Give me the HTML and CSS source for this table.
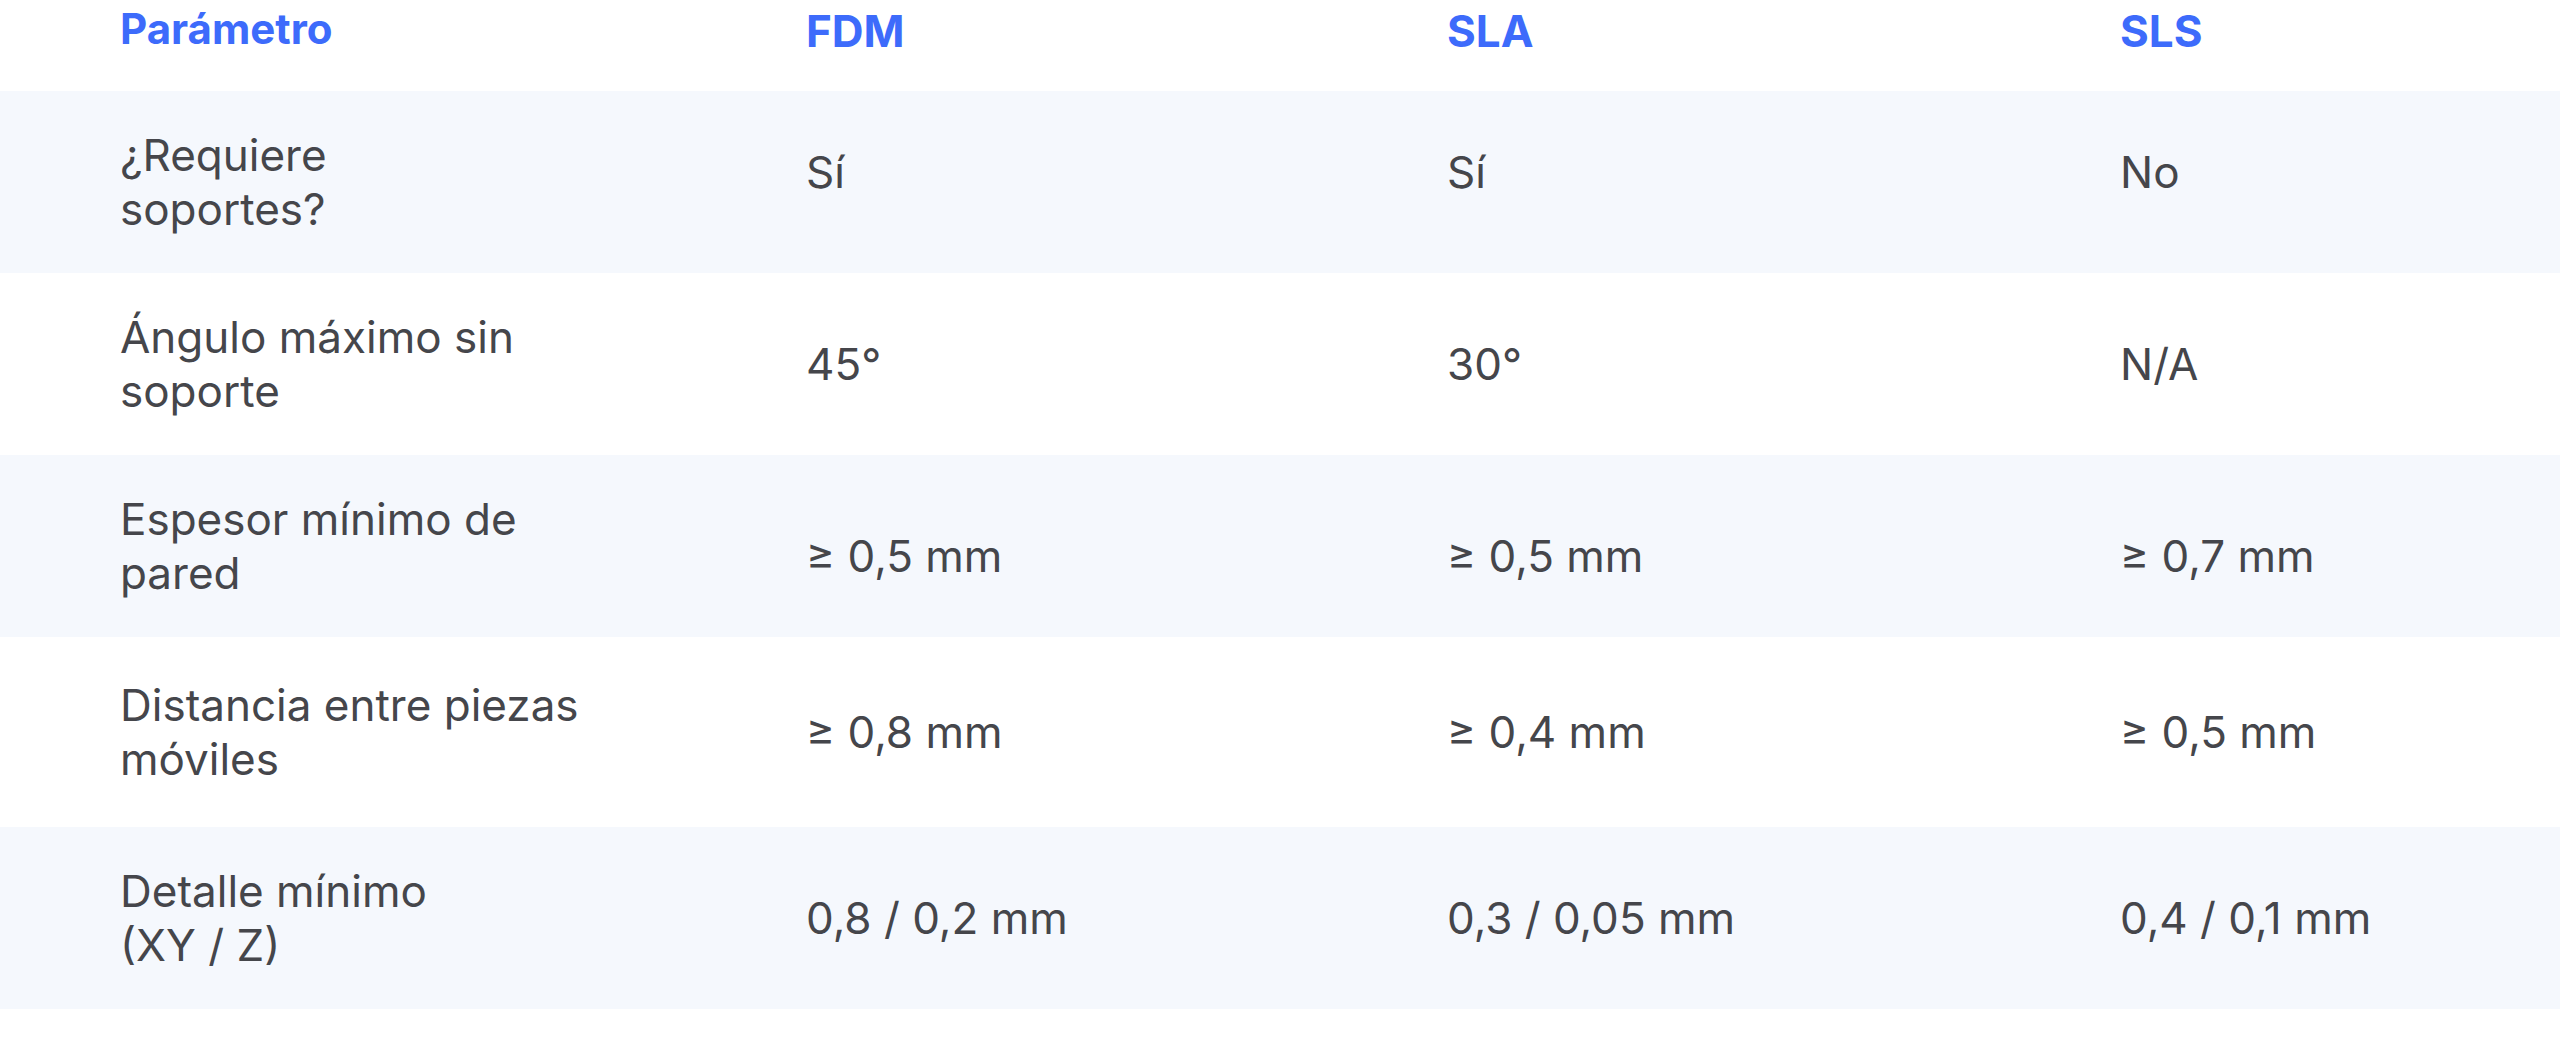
FILE: index.html
```html
<!DOCTYPE html>
<html lang="es">
<head>
  <meta charset="UTF-8" />
  <meta name="viewport" content="width=device-width, initial-scale=1.0" />
  <title>Comparativa FDM / SLA / SLS</title>
  <link rel="stylesheet" href="styles.css">
</head>
<body>
  <table class="specs">
    <colgroup>
      <col class="col-param">
      <col class="col-fdm">
      <col class="col-sla">
      <col class="col-sls">
    </colgroup>
    <thead>
      <tr>
        <th class="first">Parámetro</th>
        <th>FDM</th>
        <th>SLA</th>
        <th>SLS</th>
      </tr>
    </thead>
    <tbody>
      <tr class="alt up">
        <td class="first">¿Requiere<br>soportes?</td>
        <td>Sí</td>
        <td>Sí</td>
        <td>No</td>
      </tr>
      <tr>
        <td class="first">Ángulo máximo sin<br>soporte</td>
        <td>45°</td>
        <td>30°</td>
        <td>N/A</td>
      </tr>
      <tr class="alt down">
        <td class="first">Espesor mínimo de<br>pared</td>
        <td>≥ 0,5 mm</td>
        <td>≥ 0,5 mm</td>
        <td>≥ 0,7 mm</td>
      </tr>
      <tr class="tall">
        <td class="first">Distancia entre piezas<br>móviles</td>
        <td>≥ 0,8 mm</td>
        <td>≥ 0,4 mm</td>
        <td>≥ 0,5 mm</td>
      </tr>
      <tr class="alt">
        <td class="first">Detalle mínimo<br>(XY / Z)</td>
        <td>0,8 / 0,2 mm</td>
        <td>0,3 / 0,05 mm</td>
        <td>0,4 / 0,1 mm</td>
      </tr>
    </tbody>
  </table>
</body>
</html>
```

FILE: styles.css
```css
/* Reset */
html, body {
  margin: 0;
  padding: 0;
  background-color: #fff;
}

body {
  font-family: Inter, "Liberation Sans", sans-serif;
  color: #45464b;
}

/* Comparison table */
.specs {
  width: 100%;
  border-collapse: collapse;
  table-layout: fixed;
}
.col-param { width: 806px; }
.col-fdm { width: 641px; }
.col-sla { width: 673px; }

.specs th,
.specs td {
  padding: 0;
  text-align: left;
  vertical-align: middle;
}
.specs .first { padding-left: 120px; }

/* Header row */
.specs th {
  color: #3d6bfb;
  font-size: 44px;
  font-weight: 700;
  line-height: 53px;
  padding-top: 5px;
  padding-bottom: 33px;
}
.specs th.first {
  font-size: 42px;
  padding-top: 2px;
  padding-bottom: 36px;
}

/* Body rows */
.specs td {
  font-size: 44px;
  font-weight: 400;
  line-height: 54px;
  padding-top: 37px;
  padding-bottom: 37px;
}
.specs tr.tall td {
  padding-top: 41px;
  padding-bottom: 41px;
}
.specs tr.alt { background-color: #f5f8fd; }

/* values sit a little off-centre in some rows */
.specs tr.up td:not(.first) {
  padding-top: 27px;
  padding-bottom: 47px;
}
.specs tr.down td:not(.first) {
  padding-top: 47px;
  padding-bottom: 27px;
}
```
